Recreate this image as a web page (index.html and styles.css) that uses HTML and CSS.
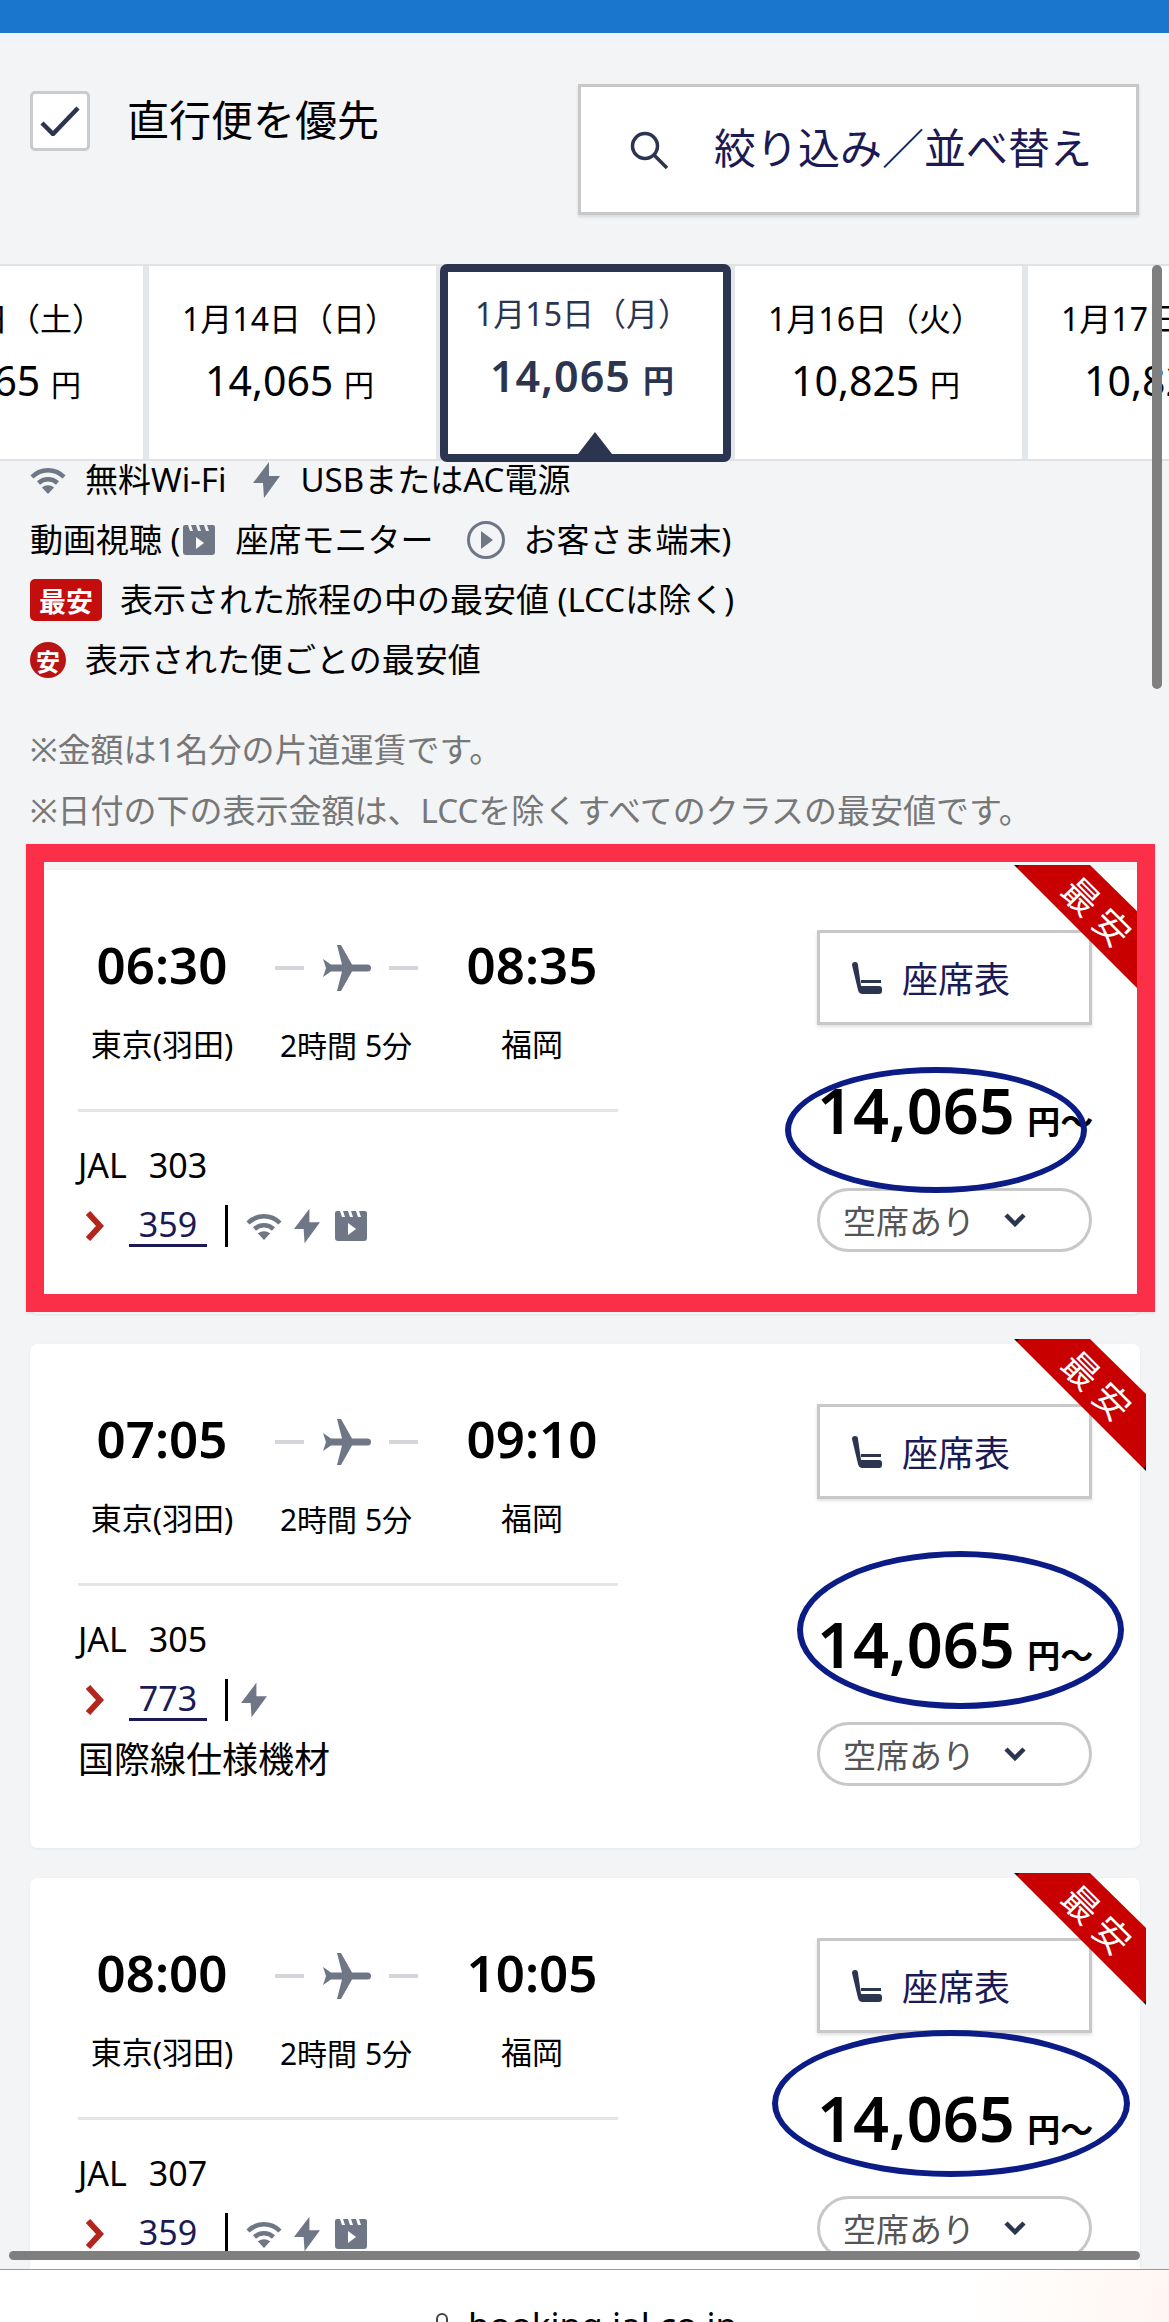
FILE: index.html
```html
<!DOCTYPE html>
<html lang="ja">
<head>
<meta charset="utf-8">
<title>JAL</title>
<link rel="stylesheet" href="styles.css">
</head>
<body>
<svg class="defs" width="0" height="0" aria-hidden="true">
  <symbol id="i-wifi" viewBox="0 0 36 27"><path d="M2 10C11 1 25 1 34 10M8.500 16C14 11 22 11 27.500 16" fill="none" stroke="currentColor" stroke-width="4.500"/><path d="M18 27l-6-6.500c3.500-3 8.500-3 12 0z" fill="currentColor"/></symbol>
  <symbol id="i-bolt" viewBox="0 0 27 36"><path d="M16 0L0 21h10l1 15 16-22H16z" fill="currentColor"/></symbol>
  <symbol id="i-clap" viewBox="0 0 32 30"><path d="M2 0h3l2 6h3L8 0h5l2 6h3l-2-6h5l2 6h3l-2-6h6a2 2 0 0 1 2 2v25a3 3 0 0 1-3 3H3a3 3 0 0 1-3-3V2a2 2 0 0 1 2-2z" fill="currentColor"/><path d="M13 12l8 6-8 6z" fill="#fff"/></symbol>
  <symbol id="i-seat" viewBox="0 0 30 32"><path d="M0 3a3 3 0 0 1 6 0l3 21h18a3 3 0 0 1 3 3v2a3 3 0 0 1-3 3H11a5 5 0 0 1-5-4zM9 18h20v3H9z" fill="currentColor"/></symbol>
  <symbol id="i-plane" viewBox="0 0 49 46"><path d="M49 23a3.500 3.500 0 0 1-3.500 3.500H30L19 46h-4l5-19.500H9L1 32l3-9-3-9 8 5.500h11L15 0h4l11 19.500h15.500A3.500 3.500 0 0 1 49 23z" fill="currentColor"/></symbol>
  <symbol id="i-chev" viewBox="0 0 19 30"><path d="M3 2l12 13L3 28" fill="none" stroke="currentColor" stroke-width="6"/></symbol>
  <symbol id="i-down" viewBox="0 0 22 14"><path d="M2 2l9 9 9-9" fill="none" stroke="currentColor" stroke-width="4.500"/></symbol>
</svg>

<div class="page">
  <main class="main">
    <div class="topbar"></div>

    <div class="toolbar">
      <label class="direct">
        <span class="checkbox"><svg class="check" viewBox="0 0 40 30"><path d="M2 17l11 11L38 2" fill="none" stroke="currentColor" stroke-width="4.500"/></svg></span>
        <span>直行便を優先</span>
      </label>
      <button class="filter">
        <svg class="search" viewBox="0 0 38 38"><circle cx="15" cy="15" r="12.500" fill="none" stroke="currentColor" stroke-width="3.500"/><path d="M24 24l13 13" stroke="currentColor" stroke-width="3.500"/></svg>
        <span class="filter-text">絞り込み／並べ替え</span>
      </button>
    </div>

    <div class="strip">
      <div class="day"><span class="day-date">1月13日（土）</span><span class="day-price">14,065 <small>円</small></span></div>
      <div class="day"><span class="day-date">1月14日（日）</span><span class="day-price">14,065 <small>円</small></span></div>
      <div class="day day-on"><span class="day-date">1月15日（月）</span><span class="day-price">14,065 <small>円</small></span></div>
      <div class="day"><span class="day-date">1月16日（火）</span><span class="day-price">10,825 <small>円</small></span></div>
      <div class="day"><span class="day-date">1月17日（水）</span><span class="day-price">10,825 <small>円</small></span></div>
    </div>

    <div class="legend">
      <div class="legend-row">
        <svg class="ic ic-wifi"><use href="#i-wifi"/></svg><span class="lt t-wifi">無料Wi-Fi</span>
        <svg class="ic ic-bolt"><use href="#i-bolt"/></svg><span class="lt">USBまたはAC電源</span>
      </div>
      <div class="legend-row">
        <span class="lt">動画視聴 (</span><svg class="ic ic-clap"><use href="#i-clap"/></svg><span class="lt t-seat">座席モニター</span>
        <svg class="ic ic-play" viewBox="0 0 40 38"><circle cx="20" cy="19" r="17.500" fill="none" stroke="currentColor" stroke-width="3"/><path d="M15 10l12 9-12 9z" fill="currentColor"/></svg><span class="lt">お客さま端末)</span>
      </div>
      <div class="legend-row">
        <span class="badge">最安</span><span class="lt">表示された旅程の中の最安値 (LCCは除く)</span>
      </div>
      <div class="legend-row">
        <span class="badge-round">安</span><span class="lt">表示された便ごとの最安値</span>
      </div>
      <p class="note note-first">※金額は1名分の片道運賃です。</p>
      <p class="note">※日付の下の表示金額は、LCCを除くすべてのクラスの最安値です。</p>
    </div>

    <div class="cards">
      <article class="card">
        <div class="info">
          <div class="times"><b>06:30</b><div class="route"><i></i><svg class="plane"><use href="#i-plane"/></svg><i></i></div><b>08:35</b></div>
          <div class="places"><span>東京(羽田)</span><span class="dur">2時間 5分</span><span>福岡</span></div>
          <div class="rule"></div>
          <div class="flight"><span>JAL</span><span>303</span></div>
          <div class="equip">
            <svg class="chev"><use href="#i-chev"/></svg><a class="plane-no">359</a><span class="sep"></span>
            <svg class="ic ic-wifi2"><use href="#i-wifi"/></svg><svg class="ic ic-bolt2"><use href="#i-bolt"/></svg><svg class="ic ic-clap2"><use href="#i-clap"/></svg>
          </div>
        </div>
        <div class="side">
          <button class="seat"><svg class="seat-ic"><use href="#i-seat"/></svg><span>座席表</span></button>
          <div class="price"><b>14,065</b> <span class="yen">円～</span></div>
          <button class="avail"><span>空席あり</span><svg class="down"><use href="#i-down"/></svg></button>
        </div>
        <div class="ribbon"><span class="ribbon-text">最安</span></div>
        <div class="ring ring-a"></div>
      </article>

      <article class="card">
        <div class="info">
          <div class="times"><b>07:05</b><div class="route"><i></i><svg class="plane"><use href="#i-plane"/></svg><i></i></div><b>09:10</b></div>
          <div class="places"><span>東京(羽田)</span><span class="dur">2時間 5分</span><span>福岡</span></div>
          <div class="rule"></div>
          <div class="flight"><span>JAL</span><span>305</span></div>
          <div class="equip">
            <svg class="chev"><use href="#i-chev"/></svg><a class="plane-no">773</a><span class="sep"></span>
            <svg class="ic ic-bolt-first"><use href="#i-bolt"/></svg>
          </div>
          <div class="extra">国際線仕様機材</div>
        </div>
        <div class="side">
          <button class="seat"><svg class="seat-ic"><use href="#i-seat"/></svg><span>座席表</span></button>
          <div class="price"><b>14,065</b> <span class="yen">円～</span></div>
          <button class="avail"><span>空席あり</span><svg class="down"><use href="#i-down"/></svg></button>
        </div>
        <div class="ribbon"><span class="ribbon-text">最安</span></div>
        <div class="ring ring-b"></div>
      </article>

      <article class="card">
        <div class="info">
          <div class="times"><b>08:00</b><div class="route"><i></i><svg class="plane"><use href="#i-plane"/></svg><i></i></div><b>10:05</b></div>
          <div class="places"><span>東京(羽田)</span><span class="dur">2時間 5分</span><span>福岡</span></div>
          <div class="rule"></div>
          <div class="flight"><span>JAL</span><span>307</span></div>
          <div class="equip">
            <svg class="chev"><use href="#i-chev"/></svg><a class="plane-no">359</a><span class="sep"></span>
            <svg class="ic ic-wifi2"><use href="#i-wifi"/></svg><svg class="ic ic-bolt2"><use href="#i-bolt"/></svg><svg class="ic ic-clap2"><use href="#i-clap"/></svg>
          </div>
        </div>
        <div class="side">
          <button class="seat"><svg class="seat-ic"><use href="#i-seat"/></svg><span>座席表</span></button>
          <div class="price"><b>14,065</b> <span class="yen">円～</span></div>
          <button class="avail"><span>空席あり</span><svg class="down"><use href="#i-down"/></svg></button>
        </div>
        <div class="ribbon"><span class="ribbon-text">最安</span></div>
        <div class="ring ring-c"></div>
      </article>
    </div>

    <div class="highlight"></div>
    <div class="vscroll"></div>
    <div class="hscroll"></div>
  </main>

  <footer class="urlbar">
    <svg class="lock" viewBox="0 0 16 24"><path d="M3 10V6a5 5 0 0 1 10 0v4" fill="none" stroke="currentColor" stroke-width="2"/><rect x="1" y="10" width="14" height="12" rx="2" fill="none" stroke="currentColor" stroke-width="2"/></svg>
    <span>booking.jal.co.jp</span>
  </footer>
</div>
</body>
</html>
```

FILE: styles.css
```css
* { box-sizing: border-box; }
html, body { margin: 0; padding: 0; }
body {
  width: 1169px;
  height: 2322px;
  overflow: hidden;
  background: #fff;
  color: #000;
  font-family: "Noto Sans", "Noto Sans CJK JP", sans-serif;
}
.defs { position: absolute; }
button { font: inherit; padding: 0; cursor: pointer; }
p { margin: 0; }

.page { display: flex; flex-direction: column; height: 2322px; }
.main {
  position: relative;
  height: 2269px;
  flex: none;
  overflow: hidden;
  background: #f2f4f6;
}

.topbar {
  height: 33px;
  background: #1a76cc;
  box-shadow: 0 6px 6px #edf5fb;
}

/* toolbar */
.toolbar {
  height: 231px;
  padding: 51px 30px 0;
  display: flex;
  justify-content: space-between;
  align-items: flex-start;
}
.direct {
  display: flex;
  align-items: center;
  gap: 37px;
  margin-top: 5px;
  font-size: 42px;
  line-height: 60px;
}
.checkbox {
  width: 60px;
  height: 60px;
  margin-top: 2px;
  display: flex;
  align-items: center;
  justify-content: center;
  background: #fff;
  border: 3px solid #c9cbce;
  border-radius: 5px;
  color: #2b3550;
}
.check { width: 40px; height: 30px; }
.filter {
  width: 561px;
  height: 131px;
  display: flex;
  align-items: center;
  padding-left: 49px;
  gap: 46px;
  background: #fff;
  border: 3px solid #c8c8c8;
  box-shadow: 0 2px 3px rgba(0, 0, 0, .12);
  color: #1b1a55;
  font-size: 42px;
}
.filter-text { padding-bottom: 8px; }
.search { width: 38px; height: 38px; color: #2b3550; flex: none; }

/* date strip */
.strip {
  height: 197px;
  display: flex;
  gap: 6px;
  background: #e4e7ea;
  border-top: 2px solid #e0e2e5;
  border-bottom: 2px solid #e0e2e5;
}
.day {
  flex: none;
  width: 287px;
  background: #fff;
  display: flex;
  flex-direction: column;
  align-items: center;
  padding: 31px 6px 0 0;
  line-height: 44px;
}
.day:first-child { margin-left: -144px; }
.day-date { font-size: 32px; }
.day-price { font-size: 41px; margin-top: 14px; line-height: 50px; }
.day-price small { font-size: 30px; }
.day-on {
  position: relative;
  width: 291px;
  height: 198px;
  margin: -2px -2px 0;
  padding: 20px 6px 0 0;
  border: 8px solid #2b3550;
  border-radius: 7px;
  color: #2b3550;
}
.day-on .day-price { font-weight: 600; font-size: 43px; letter-spacing: 1px; margin-top: 15px; }
.day-on .day-price small { font-weight: 700; font-size: 31px; }
.day-on::after {
  content: "";
  position: absolute;
  left: 130px;
  bottom: 0;
  width: 0;
  height: 0;
  border-left: 17px solid transparent;
  border-right: 17px solid transparent;
  border-bottom: 22px solid #2b3550;
}

/* legend */
.legend {
  padding: 0 30px;
  font-size: 33px;
}
.legend-row {
  height: 38px;
  margin-bottom: 22px;
  display: flex;
  align-items: center;
  white-space: nowrap;
}
.lt { padding-bottom: 4px; }
.ic { color: #6f7685; flex: none; }
.ic-wifi { width: 36px; height: 27px; margin-right: 19px; }
.t-wifi { margin-right: 27px; }
.ic-bolt { width: 27px; height: 36px; margin-right: 20px; }
.ic-clap { width: 32px; height: 30px; margin: 0 20px 0 3px; }
.t-seat { margin-right: 33px; }
.ic-play { width: 40px; height: 38px; margin-right: 17px; }
.badge {
  width: 72px;
  height: 42px;
  margin-right: 18px;
  flex: none;
  display: flex;
  align-items: center;
  justify-content: center;
  background: #c40d0d;
  border-radius: 5px;
  color: #fff;
  font-size: 27px;
  font-weight: 700;
}
.badge-round {
  width: 36px;
  height: 36px;
  margin-right: 19px;
  flex: none;
  display: flex;
  align-items: center;
  justify-content: center;
  background: #b81414;
  border-radius: 50%;
  color: #fff;
  font-size: 24px;
  font-weight: 700;
}
.note {
  height: 38px;
  line-height: 36px;
  font-size: 33px;
  color: #777;
  white-space: nowrap;
  margin-top: 23px;
}
.note-first { margin-top: 53px; }

/* flight cards */
.cards {
  margin-top: 39px;
  padding: 0 29px 0 30px;
  display: flex;
  flex-direction: column;
  gap: 30px;
}
.card {
  position: relative;
  display: flex;
  justify-content: space-between;
  padding: 0 48px;
  background: #fff;
  border-radius: 7px;
  box-shadow: 0 1px 3px rgba(0, 0, 0, .06);
}
.info { width: 540px; padding: 70px 0 66px; }
.times {
  display: grid;
  grid-template-columns: 168px 200px 172px;
  align-items: center;
  height: 50px;
  text-align: center;
}
.times b { font-size: 51px; font-weight: 600; line-height: 48px; padding-bottom: 8px; }
.route {
  display: flex;
  align-items: center;
  justify-content: center;
  gap: 18px;
}
.route i { width: 29px; height: 4px; background: #d4d6d9; }
.plane { width: 49px; height: 46px; color: #6f7685; }
.places {
  display: grid;
  grid-template-columns: 168px 200px 172px;
  margin-top: 34px;
  height: 40px;
  line-height: 40px;
  text-align: center;
  font-size: 31px;
}
.dur { font-size: 30px; padding-top: 2px; }
.rule { height: 3px; margin-top: 45px; background: #e4e5e7; }
.flight {
  display: flex;
  gap: 22px;
  margin-top: 31px;
  height: 44px;
  line-height: 44px;
  font-size: 34px;
}
.equip {
  display: flex;
  align-items: center;
  height: 44px;
  margin-top: 17px;
}
.chev { width: 19px; height: 30px; margin-left: 7px; color: #b3261e; flex: none; }
.plane-no {
  width: 78px;
  margin-left: 25px;
  height: 42px;
  line-height: 38px;
  text-align: center;
  font-size: 34px;
  color: #1b1a55;
  border-bottom: 3px solid #1b1a55;
}
.sep { width: 3px; height: 42px; margin: 0 18px; background: #000; }
.ic-wifi2 { width: 36px; height: 27px; margin-right: 12px; }
.ic-bolt2 { width: 26px; height: 36px; margin-right: 15px; }
.ic-clap2 { width: 32px; height: 30px; }
.ic-bolt-first { width: 26px; height: 36px; margin-left: -5px; }
.extra { margin-top: 16px; height: 44px; line-height: 44px; font-size: 36px; }

.side {
  width: 275px;
  padding: 60px 0 62px;
  margin-left: -1px;
  display: flex;
  flex-direction: column;
  align-items: stretch;
}
.seat {
  height: 95px;
  display: flex;
  align-items: center;
  padding-left: 32px;
  gap: 20px;
  background: #fff;
  border: 3px solid #c8c8c8;
  box-shadow: 0 2px 3px rgba(0, 0, 0, .12);
  color: #1b1a55;
  font-size: 36px;
}
.seat-ic { width: 30px; height: 32px; color: #2b3550; }
.price {
  margin-top: auto;
  margin-bottom: 43px;
  height: 70px;
  line-height: 70px;
  white-space: nowrap;
  font-size: 63px;
}
.price b { font-weight: 600; }
.yen { font-size: 33px; font-weight: 700; margin-left: -4px; }
.avail {
  height: 64px;
  display: flex;
  align-items: center;
  padding-left: 23px;
  gap: 29px;
  background: #fff;
  border: 3px solid #c8c8c8;
  border-radius: 32px;
  color: #555;
  font-size: 33px;
}
.down { width: 22px; height: 14px; color: #2b3550; }

.ribbon {
  position: absolute;
  top: -5px;
  right: -6px;
  width: 132px;
  height: 132px;
  background: linear-gradient(135deg, #111 4px, #c80000 4px, #c80000 calc(100% - 4px), #111 calc(100% - 4px));
  clip-path: polygon(0 0, 76px 0, 132px 55px, 132px 132px);
}
.ribbon-text {
  position: absolute;
  left: 41px;
  top: 28px;
  color: #fff;
  font-size: 36px;
  line-height: 44px;
  letter-spacing: 8px;
  white-space: nowrap;
  transform: rotate(45deg);
}

/* hand-drawn annotations over the screenshot */
.ring {
  position: absolute;
  border: 6px solid #0b1c86;
  border-radius: 50%;
}
.ring-a { right: 53px; top: 197px; width: 302px; height: 126px; }
.ring-b { right: 16px; top: 207px; width: 327px; height: 158px; }
.ring-c { right: 10px; top: 152px; width: 358px; height: 147px; }
.highlight {
  position: absolute;
  left: 26px;
  top: 844px;
  width: 1129px;
  height: 468px;
  border: 18px solid #fb3048;
  box-shadow: 0 1px 3px rgba(0, 0, 0, .1);
}
.vscroll {
  position: absolute;
  left: 1152px;
  top: 265px;
  width: 10px;
  height: 424px;
  background: #7f7f7f;
  border-radius: 5px;
}
.hscroll {
  position: absolute;
  left: 9px;
  top: 2251px;
  width: 1131px;
  height: 9px;
  background: #7f7f7f;
  border-radius: 5px;
}

.urlbar {
  height: 53px;
  flex: none;
  border-top: 1px solid #9a9a9a;
  background: linear-gradient(100deg, #fff 82%, #fff6f2 100%);
  display: flex;
  justify-content: center;
  align-items: flex-start;
  gap: 18px;
  padding: 31px 0 0 2px;
  font-size: 35px;
  line-height: 48px;
  overflow: hidden;
}
.lock { width: 16px; height: 24px; margin-top: 12px; color: #444; flex: none; }
```
